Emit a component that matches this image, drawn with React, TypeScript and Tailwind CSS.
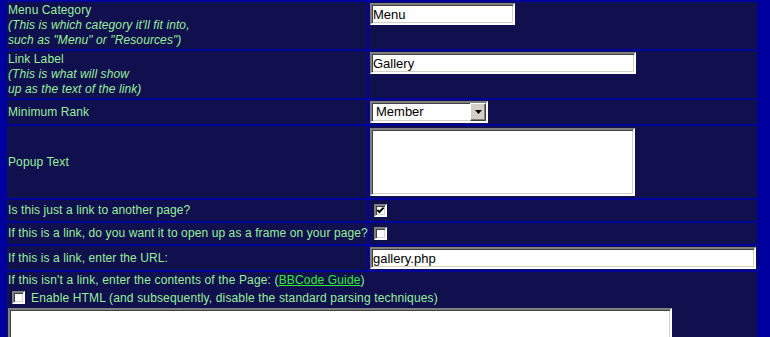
const inset =
  "border-2 border-t-[#808080] border-l-[#808080] border-b-white border-r-white bg-white shadow-[inset_1px_1px_0_#404040,inset_-1px_-1px_0_#d4d0c8]";

const cell = "bg-[#10104f] p-px";
const label = "flex items-center whitespace-nowrap text-[12px] leading-[15px] tracking-[0.1px] text-[#99ee99]";

function TextBox({ value, className }: { value: string; className: string }) {
  return (
    <input
      readOnly
      value={value}
      className={`${inset} ${className} block h-[22px] px-px text-[13px] leading-[16px] text-black outline-none`}
    />
  );
}

function CheckBox({ checked }: { checked?: boolean }) {
  return (
    <span className={`${inset} flex h-[13px] w-[13px] shrink-0 items-center justify-center`}>
      {checked && (
        <svg width="9" height="9" viewBox="0 0 9 9">
          <path d="M1.3 3.8 L3.4 6 L7.6 1.6" stroke="black" strokeWidth="1.9" fill="none" />
        </svg>
      )}
    </span>
  );
}

function RankSelect() {
  return (
    <div className={`${inset} flex h-[22px] w-[118px] items-center`}>
      <span className="flex-1 pl-[4px] text-[13px] leading-[16px] text-black">Member</span>
      <span className="flex h-[18px] w-[16px] items-center justify-center border border-t-white border-l-white border-b-[#404040] border-r-[#404040] bg-[#d4d0c8] shadow-[inset_-1px_-1px_0_#808080]">
        <svg width="7" height="4" viewBox="0 0 7 4">
          <path d="M0 0 H7 L3.5 4 Z" fill="black" />
        </svg>
      </span>
    </div>
  );
}

export default function App() {
  return (
    <div className="h-[337px] w-[770px] overflow-hidden bg-[#0000a0] font-['Liberation_Sans',Arial,sans-serif]">
      <div className="w-[760px] border-r border-[#00007a] pl-[7px] pr-[2px] pt-[2px]">
        <div className="grid grid-cols-[360px_388px] grid-rows-[47px_47px_24px_72px_21px_21px_24px] gap-[2px]">
          <div className={`${cell} whitespace-nowrap text-[12px] leading-[15px] tracking-[0.1px] text-[#99ee99]`}>
            <div>Menu Category</div>
            <div className="italic">(This is which category it'll fit into,</div>
            <div className="italic">such as "Menu" or "Resources")</div>
          </div>
          <div className={cell}>
            <TextBox value="Menu" className="w-[145px]" />
          </div>

          <div className={`${cell} whitespace-nowrap text-[12px] leading-[15px] tracking-[0.1px] text-[#99ee99]`}>
            <div>Link Label</div>
            <div className="italic">(This is what will show</div>
            <div className="italic">up as the text of the link)</div>
          </div>
          <div className={cell}>
            <TextBox value="Gallery" className="w-[266px]" />
          </div>

          <div className={`${cell} ${label}`}>Minimum Rank</div>
          <div className={cell}>
            <RankSelect />
          </div>

          <div className={`${cell} ${label}`}>Popup Text</div>
          <div className={`${cell} pt-[2px]`}>
            <textarea readOnly className={`${inset} block h-[68px] w-[265px] resize-none outline-none`} />
          </div>

          <div className={`${cell} ${label}`}>Is this just a link to another page?</div>
          <div className={`${cell} pl-[5px] pt-[4px]`}>
            <CheckBox checked />
          </div>

          <div className={`${cell} ${label}`}>If this is a link, do you want it to open up as a frame on your page?</div>
          <div className={`${cell} pl-[5px] pt-[4px]`}>
            <CheckBox />
          </div>

          <div className={`${cell} ${label}`}>If this is a link, enter the URL:</div>
          <div className={cell}>
            <TextBox value="gallery.php" className="w-[386px]" />
          </div>

          <div className={`${cell} col-span-2 h-[80px] whitespace-nowrap text-[12px] leading-[15px] tracking-[0.15px] text-[#99ee99]`}>
            <div>
              If this isn't a link, enter the contents of the Page: (
              <a className="text-[#33ee33] underline">BBCode Guide</a>)
            </div>
            <div className="mt-[3px] flex h-[13px] items-end pl-[4px]">
              <CheckBox />
              <span className="ml-[6px] translate-y-[2px]">
                Enable HTML (and subsequently, disable the standard parsing techniques)
              </span>
            </div>
            <textarea readOnly className={`${inset} mt-[4px] block h-[100px] w-[664px] resize-none outline-none`} />
          </div>
        </div>
      </div>
    </div>
  );
}
